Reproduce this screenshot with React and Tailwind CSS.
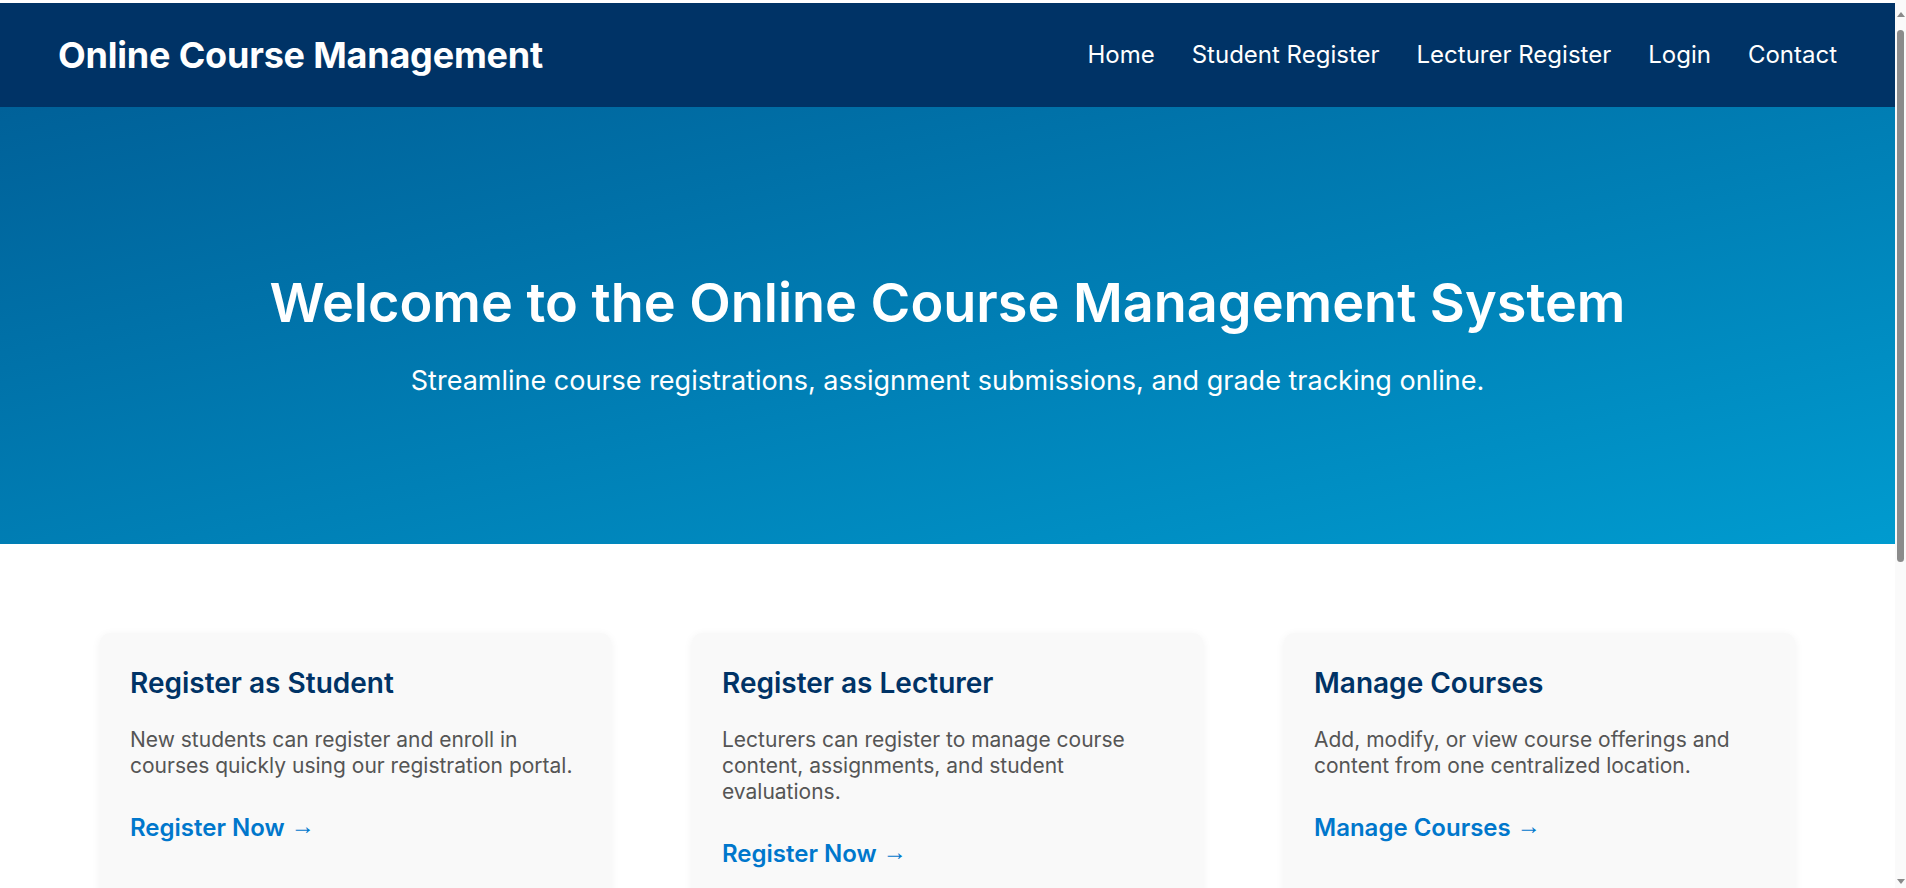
import React from 'react'

const navLinks = ['Home', 'Student Register', 'Lecturer Register', 'Login', 'Contact']

const cards = [
  {
    title: 'Register as Student',
    text: 'New students can register and enroll in courses quickly using our registration portal.',
    link: 'Register Now',
  },
  {
    title: 'Register as Lecturer',
    text: 'Lecturers can register to manage course content, assignments, and student evaluations.',
    link: 'Register Now',
  },
  {
    title: 'Manage Courses',
    text: 'Add, modify, or view course offerings and content from one centralized location.',
    link: 'Manage Courses',
  },
]

// thin window scrollbar on the right edge, like in the screenshot
function ScrollRail() {
  return (
    <aside className="w-[11px] shrink-0 h-[888px] bg-[#fafafa] flex flex-col items-center pt-[12px]">
      <div className="w-0 h-0 border-l-[4px] border-r-[4px] border-b-[5px] border-l-transparent border-r-transparent border-b-[#8a8a8a]" />
      <div className="w-[7px] h-[532px] mt-[13px] rounded-full bg-[#8b8b8b]" />
      <div className="flex-1" />
      <div className="w-0 h-0 border-l-[4px] border-r-[4px] border-t-[5px] border-l-transparent border-r-transparent border-t-[#8a8a8a] mb-[4px]" />
    </aside>
  )
}

export default function App() {
  return (
    <div className="flex items-start bg-white font-['Inter',sans-serif]">
      <main className="flex-1 min-w-0 pt-[3px]">
        <header className="h-[104px] bg-[#003366] text-white px-[58px] flex items-center justify-between">
          <h1 className="text-[36px] font-bold tracking-[-0.2px]">Online Course Management</h1>
          <nav className="flex items-center gap-[37px] text-[24px]">
            {navLinks.map(l => (
              <a key={l} href="#" className="text-white">{l}</a>
            ))}
          </nav>
        </header>

        <section className="h-[437px] bg-gradient-to-br from-[#006199] to-[#009bcf] text-white text-center pt-[164px]">
          <h2 className="text-[54px] font-semibold leading-[1.2]">Welcome to the Online Course Management System</h2>
          <p className="text-[27px] leading-[38px] mt-[26px]">Streamline course registrations, assignment submissions, and grade tracking online.</p>
        </section>

        <section className="pt-[89px] pb-[60px]">
          <div className="w-[1695px] mx-auto grid grid-cols-3 gap-[81px]">
            {cards.map(c => (
              <div key={c.title} className="bg-[#f9f9f9] rounded-[10px] shadow-[0_2px_10px_rgba(0,0,0,0.06)] p-[30px] pb-[40px]">
                <h3 className="text-[28px] leading-[40px] font-semibold text-[#003366]">{c.title}</h3>
                <p className="text-[21px] leading-[26px] text-[#555] mt-[24px] pr-[6px]">{c.text}</p>
                <a href="#" className="inline-block mt-[34px] text-[24px] leading-[30px] font-semibold text-[#0077cc]">
                  {c.link} <span className="relative top-[-2px] font-normal font-['Liberation_Sans',sans-serif]">→</span>
                </a>
              </div>
            ))}
          </div>
        </section>
      </main>
      <ScrollRail />
    </div>
  )
}
